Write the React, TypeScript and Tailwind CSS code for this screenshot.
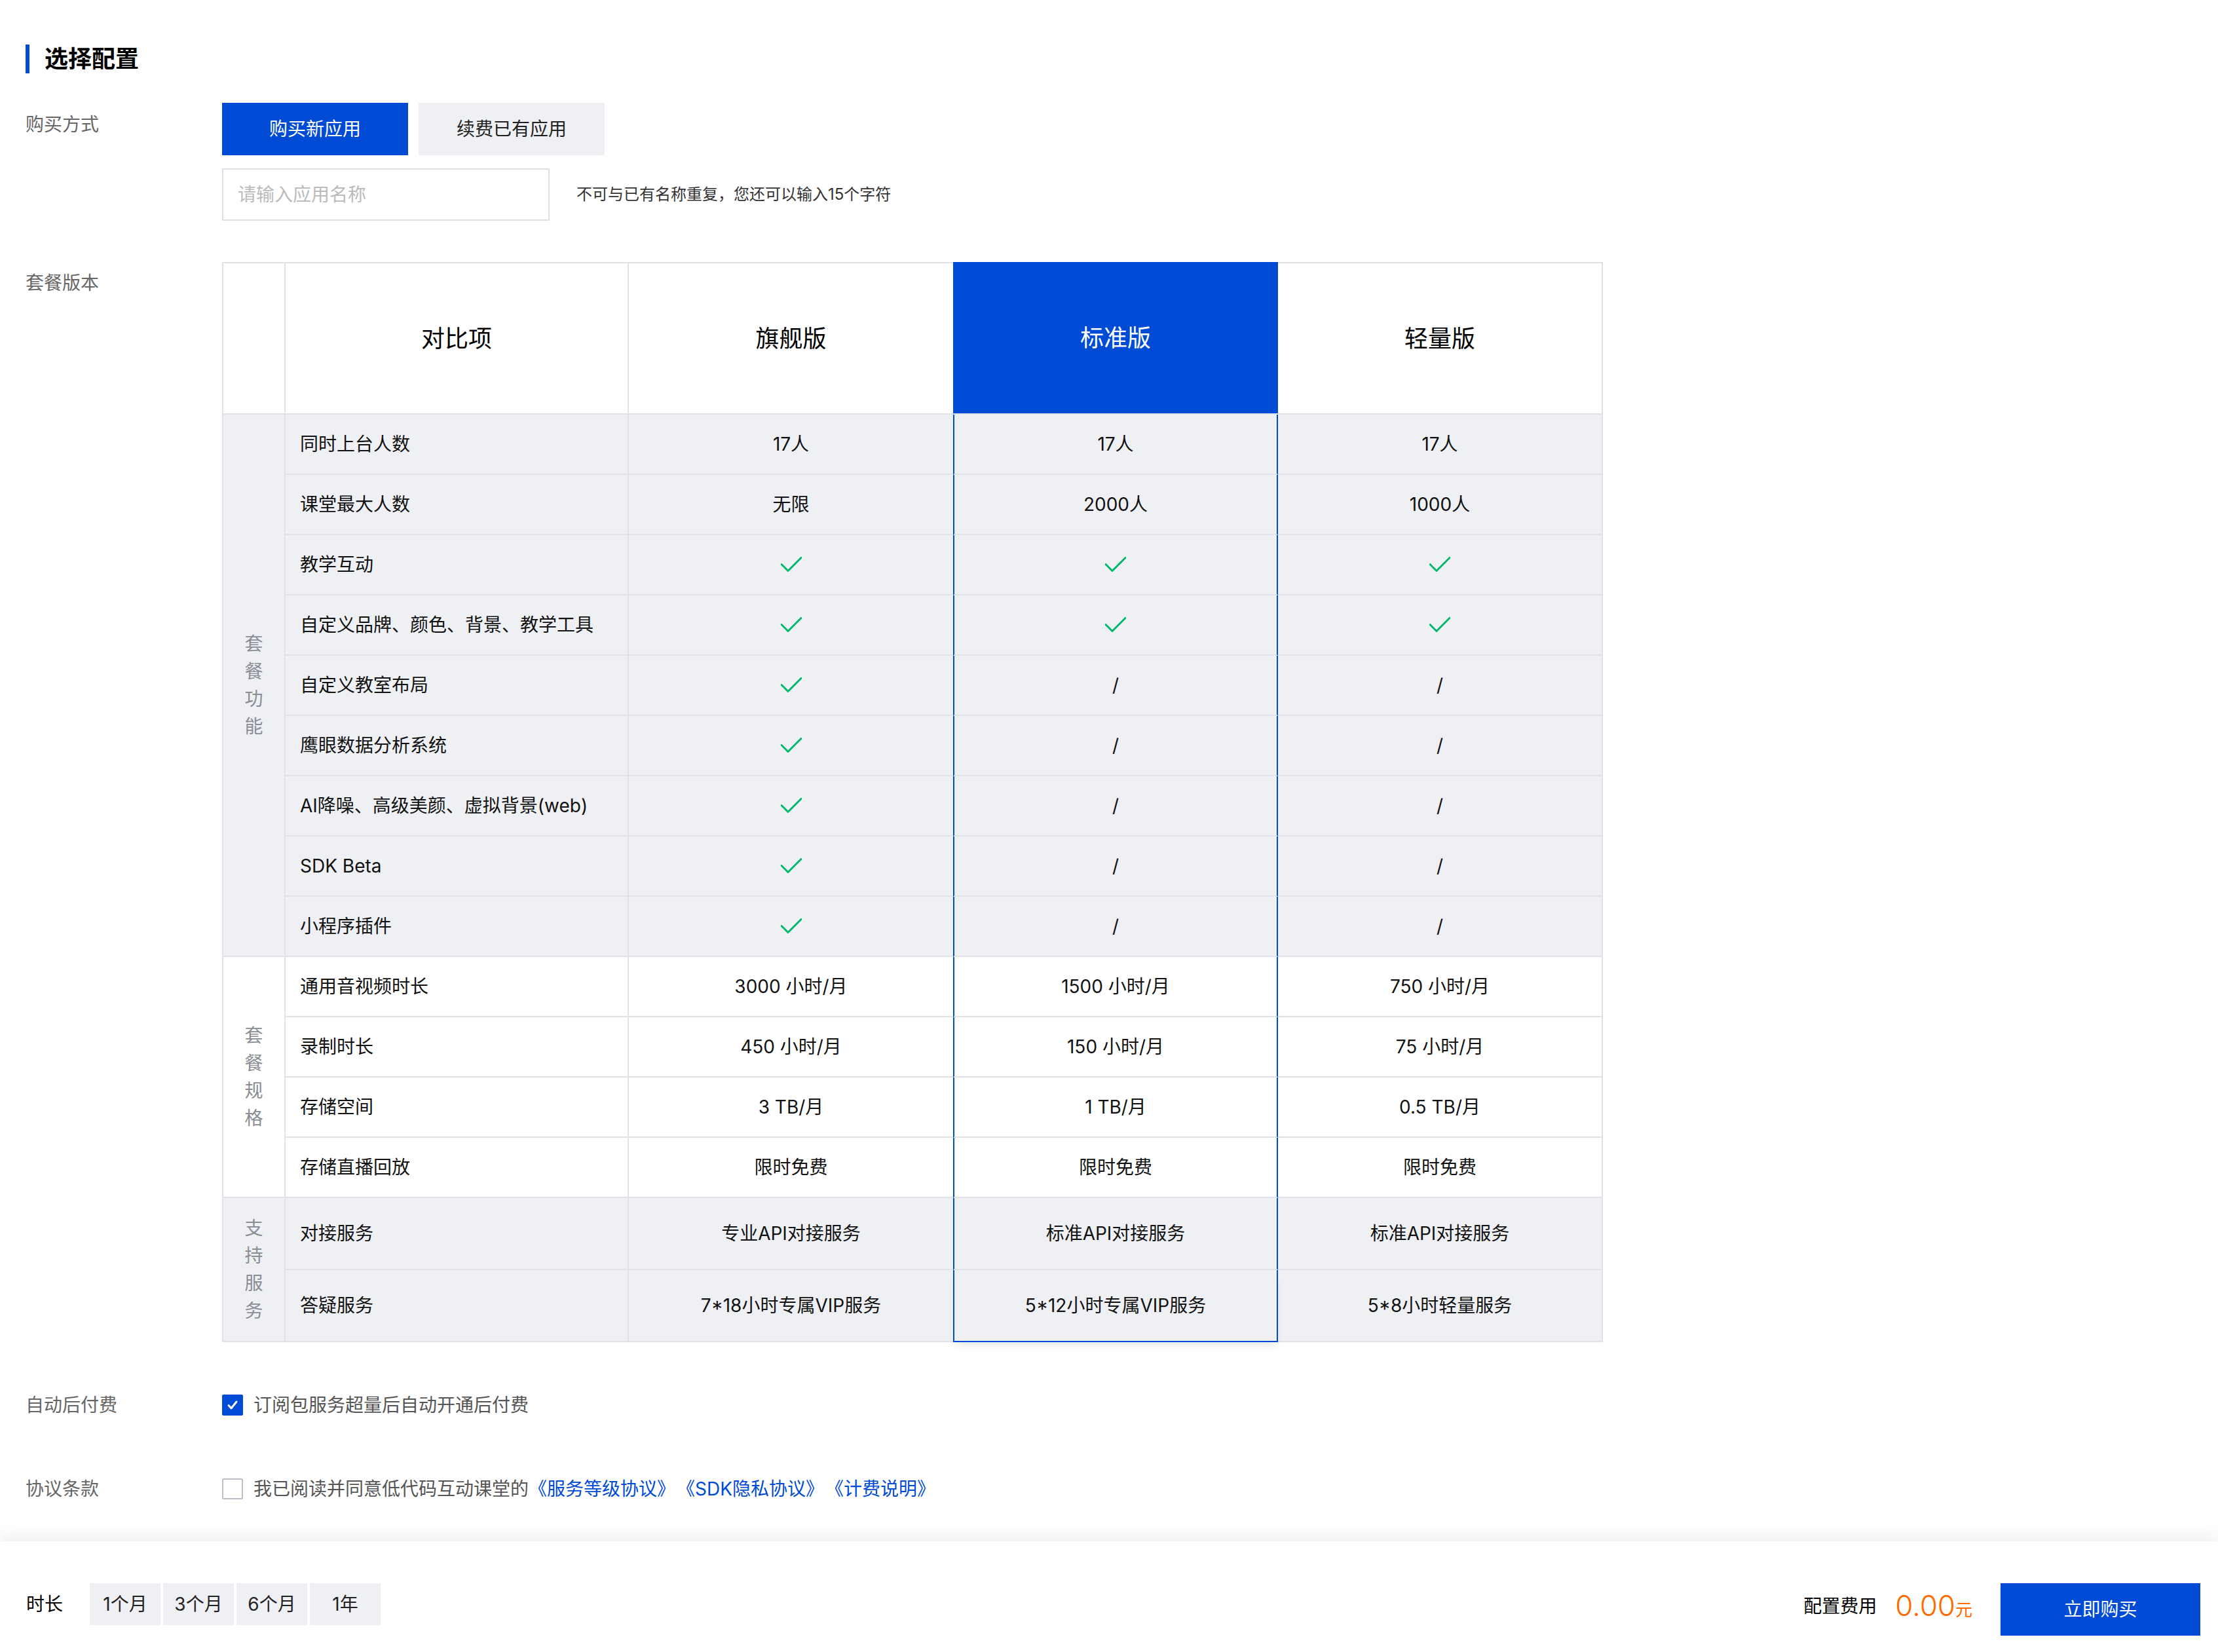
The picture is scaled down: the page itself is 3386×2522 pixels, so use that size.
import React from 'react';

const CHECK = '__check__';

const features: string[][] = [
  ['同时上台人数', '17人', '17人', '17人'],
  ['课堂最大人数', '无限', '2000人', '1000人'],
  ['教学互动', CHECK, CHECK, CHECK],
  ['自定义品牌、颜色、背景、教学工具', CHECK, CHECK, CHECK],
  ['自定义教室布局', CHECK, '/', '/'],
  ['鹰眼数据分析系统', CHECK, '/', '/'],
  ['AI降噪、高级美颜、虚拟背景(web)', CHECK, '/', '/'],
  ['SDK Beta', CHECK, '/', '/'],
  ['小程序插件', CHECK, '/', '/'],
];

const specs: string[][] = [
  ['通用音视频时长', '3000 小时/月', '1500 小时/月', '750 小时/月'],
  ['录制时长', '450 小时/月', '150 小时/月', '75 小时/月'],
  ['存储空间', '3 TB/月', '1 TB/月', '0.5 TB/月'],
  ['存储直播回放', '限时免费', '限时免费', '限时免费'],
];

const support: string[][] = [
  ['对接服务', '专业API对接服务', '标准API对接服务', '标准API对接服务'],
  ['答疑服务', '7*18小时专属VIP服务', '5*12小时专属VIP服务', '5*8小时轻量服务'],
];

function Check() {
  return (
    <svg width="32" height="24" viewBox="0 0 32 24" fill="none">
      <path d="M1 11.5 L11 21.5 L31 1.5" stroke="#00b86b" strokeWidth="3" strokeLinecap="round" strokeLinejoin="round" />
    </svg>
  );
}

function CellContent({ v }: { v: string }) {
  if (v === CHECK) return <Check />;
  return <span>{v}</span>;
}

function Group({
  chars,
  rows,
  tall,
  gray,
  last,
}: {
  chars: string[];
  rows: string[][];
  tall?: boolean;
  gray?: boolean;
  last?: boolean;
}) {
  const bg = gray ? 'bg-[#eef0f4]' : 'bg-white';
  const h = tall ? 'h-[110px]' : 'h-[92px]';
  return (
    <div className={`flex ${bg}`}>
      <div className="w-[95px] shrink-0 border-l-2 border-b-2 border-[#e0e2e7] flex flex-col items-center justify-center text-[28px] leading-[42px] text-[#8a8d94]">
        {chars.map((c) => (
          <span key={c}>{c}</span>
        ))}
      </div>
      <div className="flex flex-col">
        {rows.map((r, i) => {
          const isLast = last && i === rows.length - 1;
          return (
            <div key={r[0]} className={`flex ${h} text-[28px] leading-[40px] text-[#111]`}>
              <div className="w-[524px] shrink-0 border-l-2 border-b-2 border-[#e0e2e7] pl-[22px] flex items-center">
                {r[0]}
              </div>
              <div className="w-[497px] shrink-0 border-l-2 border-b-2 border-[#e0e2e7] flex items-center justify-center">
                <CellContent v={r[1]} />
              </div>
              <div
                className={
                  isLast
                    ? 'relative w-[496px] shrink-0 border-l-2 border-r-2 border-b-2 border-l-[#004bd6] border-r-[#004bd6] border-b-[#004bd6] flex items-center justify-center shadow-[0_10px_12px_-6px_rgba(0,40,120,0.12)]'
                    : 'w-[496px] shrink-0 border-l-2 border-r-2 border-b-2 border-l-[#004bd6] border-r-[#004bd6] border-b-[#e0e2e7] flex items-center justify-center'
                }
              >
                <CellContent v={r[2]} />
              </div>
              <div className="w-[496px] shrink-0 border-r-2 border-b-2 border-[#e0e2e7] flex items-center justify-center">
                <CellContent v={r[3]} />
              </div>
            </div>
          );
        })}
      </div>
    </div>
  );
}

function Label({ children, pt }: { children: React.ReactNode; pt?: string }) {
  return (
    <div className={`w-[300px] shrink-0 text-[28px] leading-[40px] text-[#666] ${pt ?? ''}`}>{children}</div>
  );
}

export default function App() {
  return (
    <div className="w-[3386px] min-h-[2522px] bg-white flex flex-col font-['Inter','Noto_Sans_CJK_SC',sans-serif] text-black">
      <div className="pl-[39px] pt-[68px]">
        {/* Heading */}
        <div className="flex items-center h-[44px]">
          <div className="w-[6px] h-[44px] bg-[#004bd6]" />
          <span className="ml-[23px] text-[36px] leading-[44px] font-semibold text-black">选择配置</span>
        </div>

        {/* 购买方式 */}
        <div className="flex mt-[45px]">
          <Label pt="pt-[13px]">购买方式</Label>
          <div className="flex flex-col">
            <div className="flex gap-[16px]">
              <div className="w-[284px] h-[80px] bg-[#004bd6] text-white text-[28px] flex items-center justify-center">
                购买新应用
              </div>
              <div className="w-[284px] h-[80px] bg-[#eff0f3] text-[#222] text-[28px] flex items-center justify-center">
                续费已有应用
              </div>
            </div>
            <div className="flex items-center mt-[20px]">
              <div className="w-[500px] h-[80px] border-2 border-[#dde0e6] pl-[22px] flex items-center text-[28px] text-[#bbbbbb]">
                请输入应用名称
              </div>
              <span className="ml-[41px] text-[24px] text-[#333]">不可与已有名称重复，您还可以输入15个字符</span>
            </div>
          </div>
        </div>

        {/* 套餐版本 */}
        <div className="flex mt-[63px]">
          <Label pt="pt-[12px]">套餐版本</Label>
          <div className="flex flex-col w-[2108px]">
            {/* header */}
            <div className="flex h-[233px] text-[36px] text-black">
              <div className="w-[95px] shrink-0 border-l-2 border-t-2 border-b-2 border-[#e0e2e7] bg-white" />
              <div className="w-[524px] shrink-0 border-l-2 border-t-2 border-b-2 border-[#e0e2e7] flex items-center justify-center">
                对比项
              </div>
              <div className="w-[497px] shrink-0 border-l-2 border-t-2 border-b-2 border-[#e0e2e7] flex items-center justify-center">
                旗舰版
              </div>
              <div className="w-[496px] shrink-0 bg-[#004bd6] border-b-2 border-b-[#e0e2e7] text-white flex items-center justify-center">
                标准版
              </div>
              <div className="w-[496px] shrink-0 border-r-2 border-t-2 border-b-2 border-[#e0e2e7] flex items-center justify-center">
                轻量版
              </div>
            </div>
            <Group chars={['套', '餐', '功', '能']} rows={features} gray />
            <Group chars={['套', '餐', '规', '格']} rows={specs} />
            <Group chars={['支', '持', '服', '务']} rows={support} tall gray last />
          </div>
        </div>

        {/* 自动后付费 */}
        <div className="flex items-center h-[32px] mt-[80px]">
          <Label>自动后付费</Label>
          <div className="flex items-center">
            <div className="w-[32px] h-[32px] bg-[#004bd6] rounded-[2px] flex items-center justify-center">
              <svg width="32" height="32" viewBox="0 0 32 32" fill="none">
                <path d="M10 16.5 L14 21 L22 11" stroke="white" strokeWidth="3" strokeLinecap="round" strokeLinejoin="round" />
              </svg>
            </div>
            <span className="ml-[16px] text-[28px] leading-[40px] text-[#555]">订阅包服务超量后自动开通后付费</span>
          </div>
        </div>

        {/* 协议条款 */}
        <div className="flex items-center h-[32px] mt-[96px]">
          <Label>协议条款</Label>
          <div className="flex items-center">
            <div className="w-[32px] h-[32px] bg-white border-2 border-[#b9c0cc] rounded-[2px]" />
            <span className="ml-[16px] flex items-center text-[28px] leading-[40px] text-[#555]">
              <span>我已阅读并同意低代码互动课堂的</span>
              <span className="text-[#004bd6]">《服务等级协议》</span>
              <span className="ml-[2px] text-[#004bd6]">《SDK隐私协议》</span>
              <span className="ml-[2px] text-[#004bd6]">《计费说明》</span>
            </span>
          </div>
        </div>
      </div>

      {/* Bottom bar */}
      <div className="mt-auto h-[169px] bg-white shadow-[0_-8px_24px_rgba(0,20,60,0.07)] flex items-start justify-between pt-[64px] pl-[40px] pr-[27px]">
        <div className="flex items-center h-[64px]">
          <span className="text-[28px] text-black">时长</span>
          <div className="ml-[41px] flex gap-[4px]">
            {['1个月', '3个月', '6个月', '1年'].map((t) => (
              <div key={t} className="w-[108px] h-[64px] bg-[#eff0f3] text-[28px] text-[#222] flex items-center justify-center">
                {t}
              </div>
            ))}
          </div>
        </div>
        <div className="flex items-center h-[80px]">
          <div className="flex items-center mb-[10px]">
            <span className="text-[28px] text-black">配置费用</span>
            <span className="ml-[28px] flex items-baseline text-[#ff6a00]">
              <span className="text-[44px] leading-[48px] font-light">0.00</span>
              <span className="text-[26px]">元</span>
            </span>
          </div>
          <div className="ml-[43px] w-[305px] h-[80px] bg-[#004bd6] text-white text-[28px] flex items-center justify-center">
            立即购买
          </div>
        </div>
      </div>
    </div>
  );
}
